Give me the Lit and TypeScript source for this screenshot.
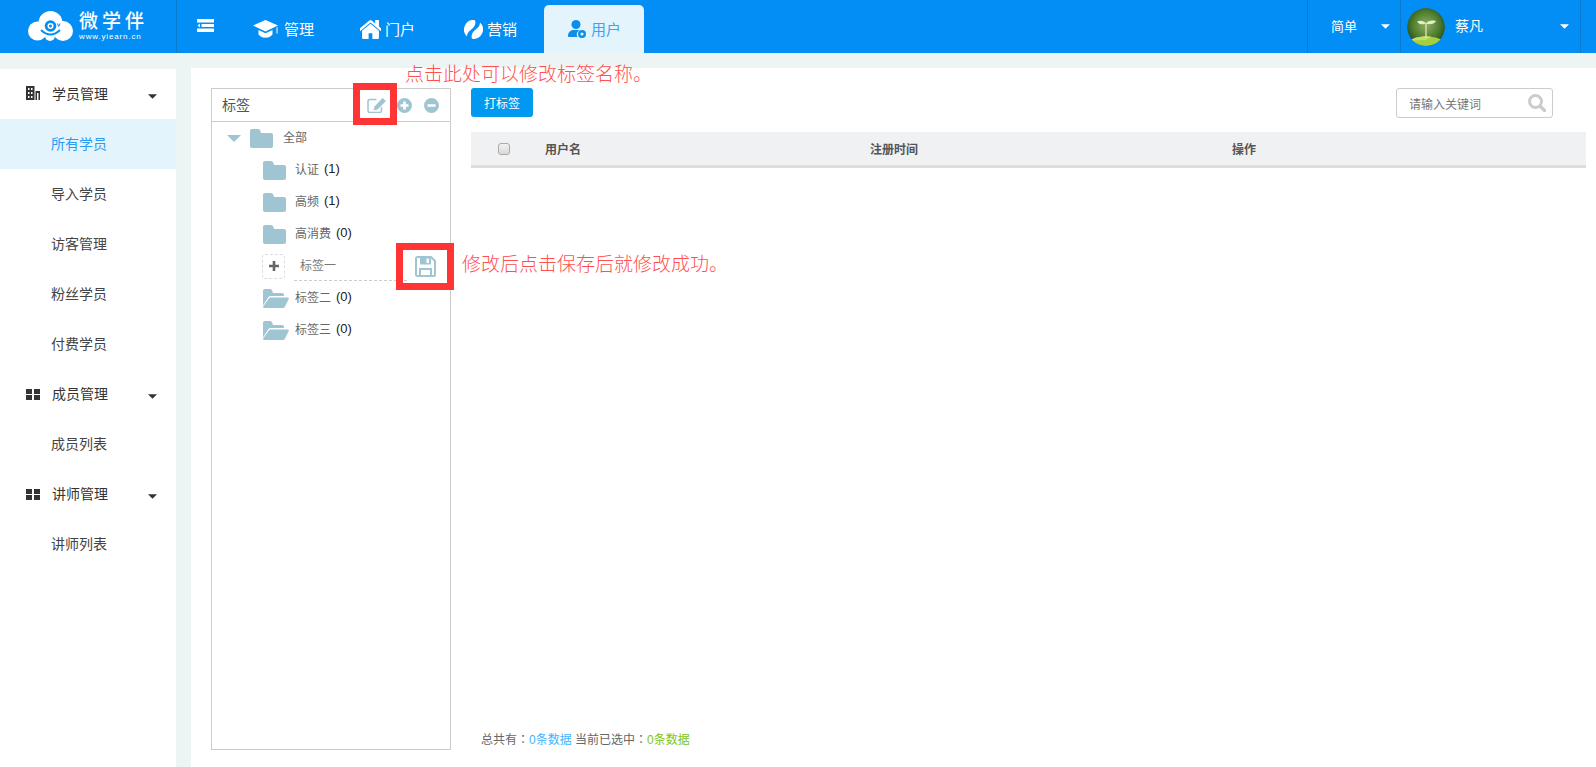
import { LitElement, html, css } from "lit";
import { customElement } from "lit/decorators.js";

const folder = html`<svg class="folder" viewBox="0 0 23 19"><path d="M2 0h6c1.500 0 2 1 2.500 2.500L11 4h10c1.200 0 2 .8 2 2v11c0 1.200-.8 2-2 2H2c-1.200 0-2-.8-2-2V2C0 .8.800 0 2 0z"/></svg>`;
const folderOpen = html`<svg class="folder-open" viewBox="0 0 26 19"><path d="M0 2c0-1.200.8-2 2-2h5c1.200 0 2 .8 2.500 2.500L10 4h9c1.200 0 2 .8 2 2v1H8c-1.500 0-2.500.6-3.200 2L0 16.500z"/><path d="M8 8.500h16.500c1.200 0 1.700.8 1.200 1.800L22 17.500c-.6 1-1.300 1.500-2.500 1.500H1.500c-1.200 0-1.700-.8-1.200-1.800L5.500 10c.6-1 1.300-1.500 2.500-1.500z"/></svg>`;
const caret = html`<svg class="caret" viewBox="0 0 8 4"><path d="M0 0h8L4 4z"/></svg>`;
const building = html`<svg class="side-ico" viewBox="0 0 14 14"><path d="M0 0h8.500v14H0zM9.500 5H14v9h-1.500V7h-1.500v7H9.500z"/><path fill="#fff" d="M2 2h1.500v2H2zM5 2h1.500v2H5zM2 6h1.500v2H2zM5 6h1.500v2H5zM2 10h1.500v2H2zM5 10h1.500v2H5z"/></svg>`;
const grid = html`<svg class="side-ico grid" viewBox="0 0 14 11"><path d="M0 0h6v5H0zM8 0h6v5H8zM0 6h6v5H0zM8 6h6v5H8z"/></svg>`;

const groups = [
  { title: "学员管理", icon: building, items: ["所有学员", "导入学员", "访客管理", "粉丝学员", "付费学员"] },
  { title: "成员管理", icon: grid, items: ["成员列表"] },
  { title: "讲师管理", icon: grid, items: ["讲师列表"] },
];

@customElement("app-root")
export class AppRoot extends LitElement {
  static styles = css`
    :host {
      display: flex;
      flex-direction: column;
      position: relative;
      height: 767px;
      overflow: hidden;
      background: #edf5f4;
      font-family: "Liberation Sans", "Noto Sans CJK SC", sans-serif;
      color: #333;
    }
    svg { display: block; flex: none; }
    .top {
      height: 53px;
      flex: none;
      display: flex;
      background: #038ef5;
      color: #fff;
      padding-right: 15px;
    }
    .logo {
      width: 177px;
      flex: none;
      box-sizing: border-box;
      padding-left: 28px;
      padding-top: 11px;
      display: flex;
      gap: 6px;
      border-right: 1px solid #0b79cc;
    }
    .cloud { width: 45px; height: 30px; }
    .logo-text { padding-top: 1px; }
    .logo-cn { font-size: 19px; line-height: 20px; letter-spacing: 4px; font-weight: 500; white-space: nowrap; }
    .logo-en { font-size: 8px; line-height: 9px; letter-spacing: 0.850px; white-space: nowrap; }
    .collapse { width: 52px; flex: none; box-sizing: border-box; padding: 19px 0 0 20px; }
    .collapse svg { width: 17px; height: 13px; }
    .tabs {
      display: grid;
      grid-template-columns: 107px 104px 104px 100px;
      padding-top: 5px;
    }
    .tab {
      display: flex;
      align-items: center;
      padding: 0 0 0 24px;
      gap: 4px;
      font-size: 15px;
      border-radius: 5px 5px 0 0;
    }
    .tab.wide { gap: 5px; }
    .tab span { margin-bottom: 2px; }
    .tab.on { background: #e3f4fd; color: #3fa2f2; }
    .spacer { flex: 1; }
    .drop {
      border-left: 1px solid #0b79cc;
      display: flex;
      align-items: center;
      box-sizing: border-box;
      height: 53px;
    }
    .drop span { margin-bottom: 3px; }
    .drop .caret { width: 9px; height: 5px; fill: #fff; }
    .d1 { width: 93px; padding-left: 23px; font-size: 13px; gap: 24px; }
    .d2 { width: 181px; border-right: 1px solid #0b79cc; padding-left: 6px; font-size: 14px; }
    .avatar { width: 38px; height: 38px; border-radius: 50%; }
    .d2 .name { margin-left: 10px; width: 105px; }
    .body { flex: 1; display: flex; gap: 15px; min-height: 0; }
    .side {
      width: 176px;
      flex: none;
      margin-top: 16px;
      background: #fff;
      font-size: 14px;
    }
    .row {
      height: 50px;
      box-sizing: border-box;
      padding: 0 0 2px 51px;
      display: flex;
      align-items: center;
      color: #444;
    }
    .row.on { background: #e3f4fd; color: #2b9cf2; }
    .row.g { padding-left: 26px; color: #333; }
    .side-ico { width: 14px; height: 14px; fill: #333; margin-right: 12px; }
    .side-ico.grid { height: 11px; margin-top: 2px; }
    .g .caret { width: 9px; height: 5px; fill: #333; margin: 7px 0 0 40px; }
    .main {
      flex: 1;
      margin-top: 15px;
      background: #fff;
      padding: 20px 10px 17px 20px;
      display: flex;
      gap: 20px;
      min-width: 0;
    }
    .panel {
      width: 240px;
      flex: none;
      box-sizing: border-box;
      border: 1px solid #ccc;
    }
    .panel-head {
      height: 32px;
      border-bottom: 1px solid #ccc;
      display: flex;
      align-items: center;
      padding: 0 11px 0 10px;
      font-size: 14px;
      color: #555;
    }
    .panel-head .t { flex: 1; margin-bottom: 2px; }
    .ph-ico { fill: #a0c5d2; }
    .edit { width: 19px; height: 15px; margin-right: 11px; }
    .circ { width: 15px; height: 15px; }
    .circ + .circ { margin-left: 12px; }
    .tree { font-size: 12px; color: #666; }
    .node { height: 32px; display: flex; align-items: center; padding-left: 51px; }
    .node span { margin-bottom: 3px; }
    .node.root { padding-left: 15px; }
    .folder { width: 23px; height: 19px; fill: #a0c5d2; margin-right: 9px; }
    .root .folder { margin-right: 10px; }
    .folder-open { width: 26px; height: 19px; fill: #a0c5d2; margin-right: 6px; }
    .tree-caret { width: 14px; height: 7px; fill: #a0c5d2; margin-right: 9px; }
    .num { font-size: 13px; color: #222; margin-left: 5px; }
    .add {
      width: 23px;
      height: 25px;
      box-sizing: border-box;
      border: 1px dashed #ddd;
      border-radius: 3px;
      display: flex;
      align-items: center;
      justify-content: center;
      margin: 0 9px 0 -1px;
    }
    .add svg { width: 10px; height: 10px; fill: #666; }
    .edit-field {
      width: 113px;
      height: 28px;
      margin-top: 1px;
      box-sizing: border-box;
      border-bottom: 1px dashed #ccc;
      padding: 0 0 3px 6px;
      display: flex;
      align-items: center;
      color: #777;
    }
    .save { width: 21px; height: 21px; margin-left: 8px; }
    .content { flex: 1; display: flex; flex-direction: column; min-width: 0; }
    .toolbar { display: flex; justify-content: space-between; align-items: flex-start; padding-right: 33px; height: 44px; }
    .btn {
      width: 62px;
      height: 29px;
      background: #0098f0;
      color: #fff;
      border-radius: 3px;
      font-size: 12px;
      display: flex;
      align-items: center;
      justify-content: center;
    }
    .search {
      width: 157px;
      height: 30px;
      box-sizing: border-box;
      border: 1px solid #ccc;
      border-radius: 3px;
      display: flex;
      align-items: center;
      justify-content: space-between;
      padding: 0 6px 0 12px;
      font-size: 12px;
      color: #777;
    }
    .search svg { width: 18px; height: 18px; }
    .thead {
      height: 36px;
      box-sizing: border-box;
      background: #f0f1f3;
      border-bottom: 3px solid #ddd;
      display: grid;
      grid-template-columns: 74px 325px 362px 1fr;
      align-items: center;
      font-size: 12px;
      font-weight: bold;
      color: #555;
    }
    .check {
      width: 12px;
      height: 12px;
      box-sizing: border-box;
      margin-left: 27px;
      border: 1px solid #aaa;
      border-radius: 3px;
      background: linear-gradient(#f2f2f2, #d9d9d9);
    }
    .tbody { flex: 1; }
    .foot { font-size: 12px; color: #666; padding: 0 0 1px 10px; line-height: 17px; }
    .colon { font-family: "Noto Sans CJK TC", sans-serif; }
    .blue { color: #3db5ff; }
    .green { color: #7cc520; }
    .box { position: absolute; box-sizing: border-box; border: 7px solid #ff3535; }
    .b1 { left: 353px; top: 83px; width: 44px; height: 42px; }
    .b2 { left: 396px; top: 243px; width: 58px; height: 47px; }
    .note { position: absolute; font-size: 19px; line-height: 24px; color: #ff4f4f; white-space: nowrap; font-weight: 300; }
    .n1 { left: 405px; top: 63px; }
    .n2 { left: 462px; top: 253px; }
  `;

  render() {
    return html`
      <div class="top">
        <div class="logo">
          <svg class="cloud" viewBox="0 0 45 30">
            <g fill="#fff">
              <circle cx="9.500" cy="20" r="9.500"/>
              <circle cx="22.500" cy="12" r="12"/>
              <circle cx="35" cy="20" r="10"/>
              <circle cx="22" cy="25" r="5"/>
            </g>
            <circle cx="22.500" cy="15" r="5.800" fill="#038ef5"/>
            <circle cx="22.500" cy="15" r="3" fill="#fff"/>
            <circle cx="22.500" cy="15" r="1.500" fill="#038ef5"/>
            <path d="M13 19c3 3 6 4.500 9.500 4.500S29 22 32 19" fill="none" stroke="#038ef5" stroke-width="1.800"/>
            <path d="M29.500 12.500l1.200 3 1.300-3" fill="none" stroke="#038ef5" stroke-width="1"/>
          </svg>
          <div class="logo-text">
            <div class="logo-cn">微学伴</div>
            <div class="logo-en">www.yiearn.cn</div>
          </div>
        </div>
        <div class="collapse">
          <svg viewBox="0 0 17 13"><path fill="#fff" d="M0 0h17v3.500H0zM0 9.500h17V13H0zM4.500 5h12.500v3H4.500z"/><path fill="#fff" d="M3 4.500v4L.5 6.500z"/></svg>
        </div>
        <div class="tabs">
          <div class="tab wide">
            <svg width="26" height="18" viewBox="0 0 26 18"><path fill="#fff" d="M12.500 0L25 5.500l-12.500 6L0 5.500zM5.500 10l7 3.300 7-3.300v4.500c-1.500 2-4 3.300-7 3.300s-5.500-1.300-7-3.300zM23.500 7.500l1-.5v6.500h-1z"/></svg>
            <span>管理</span>
          </div>
          <div class="tab">
            <svg width="21" height="21" viewBox="180 180 1432 1432"><path fill="#fff" d="M1472 992v480q0 26-19 45t-45 19h-384v-384h-256v384h-384q-26 0-45-19t-19-45v-480q0-1 .5-3t.5-3l575-474 575 474q1 2 1 6zm223-69l-62 74q-8 9-21 11h-3q-13 0-21-7l-692-577-692 577q-12 8-24 7-13-2-21-11l-62-74q-8-10-7-23.500t11-21.500l719-599q32-26 76-26t76 26l244 204v-195q0-14 9-23t23-9h192q14 0 23 9t9 23v408l219 182q10 8 11 21.500t-7 23.500z"/></svg>
            <span>门户</span>
          </div>
          <div class="tab">
            <svg width="19" height="19" viewBox="0 0 19 19"><path fill="#fff" d="M11 .2A9.500 9.500 0 0 0 3 16.500C3 12 7 10 9 8c2-2 3-5 2-7.800z"/><path fill="#fff" d="M8 18.800A9.500 9.500 0 0 0 16 2.500C16 7 12 9 10 11c-2 2-3 5-2 7.800z"/></svg>
            <span>营销</span>
          </div>
          <div class="tab on wide">
            <svg width="18" height="18" viewBox="0 0 18 18"><circle cx="8" cy="4.500" r="4.500" fill="#0d8fe6"/><path fill="#0d8fe6" d="M1 17c-.6 0-1-.4-1-1 0-3.500 2.500-6 5.500-6h4c.8 0 1.500.2 2 .5-2.500.8-3.500 4-2 6.500z"/><circle cx="14" cy="14" r="2.800" fill="none" stroke="#0d8fe6" stroke-width="2.400"/></svg>
            <span>用户</span>
          </div>
        </div>
        <div class="spacer"></div>
        <div class="drop d1"><span>简单</span>${caret}</div>
        <div class="drop d2">
          <svg class="avatar" viewBox="0 0 38 38">
            <defs><radialGradient id="av" cx="50%" cy="45%" r="58%"><stop offset="0" stop-color="#8fae62"/><stop offset=".6" stop-color="#4f7e30"/><stop offset="1" stop-color="#23491a"/></radialGradient></defs>
            <circle cx="19" cy="19" r="19" fill="url(#av)"/>
            <path d="M4 32c3-2 6-3 9-3 3-1 9-1 12 0 3 0 6 1 9 2.500-3 4-9 6.500-15 6.500S7 36 4 32z" fill="#a6cf3c"/>
            <path d="M4 32c3-2 6-3 9-3 3-1 9-1 12 0-4 1-6 4-9 3-3 0-8 1-12 0z" fill="#c3dd72"/>
            <path d="M18.300 30V15h1.400v15z" fill="#d8e6b0"/>
            <path d="M19 15.500c-2-3-6-3.500-9-2 2 3 6 3.500 9 2zM19 15.500c2-3 6-3.500 10-2.500-2 3.500-7 4-10 2.500z" fill="#e3eeca"/>
          </svg>
          <span class="name">蔡凡</span>${caret}
        </div>
      </div>
      <div class="body">
        <div class="side">
          ${groups.map(
            (g) => html`
              <div class="row g">${g.icon}<span>${g.title}</span>${caret}</div>
              ${g.items.map((i) => html`<div class="row ${i === "所有学员" ? "on" : ""}">${i}</div>`)}
            `
          )}
        </div>
        <div class="main">
          <div class="panel">
            <div class="panel-head">
              <span class="t">标签</span>
              <svg class="ph-ico edit" viewBox="0 0 19 15">
                <path d="M9.500 1.500H3C1.800 1.500 1 2.300 1 3.500v9c0 1.200.8 2 2 2h9.500c1.200 0 2-.8 2-2V9" fill="none" stroke="#a0c5d2" stroke-width="1.500"/>
                <path d="M15.500 0L19 3l-8.500 8.500L6.500 12.500l1-4z"/>
              </svg>
              <svg class="ph-ico circ" viewBox="0 0 15 15"><path fill-rule="evenodd" d="M7.500 0a7.500 7.500 0 1 0 0 15 7.500 7.500 0 0 0 0-15zM6.200 3.500h2.600v2.700h2.700v2.600H8.800v2.700H6.200V8.800H3.500V6.200h2.700z"/></svg>
              <svg class="ph-ico circ" viewBox="0 0 15 15"><path fill-rule="evenodd" d="M7.500 0a7.500 7.500 0 1 0 0 15 7.500 7.500 0 0 0 0-15zM3.500 6.200h8v2.600h-8z"/></svg>
            </div>
            <div class="tree">
              <div class="node root">
                <svg class="tree-caret" viewBox="0 0 14 7"><path d="M0 0h14L7 7z"/></svg>
                ${folder}<span>全部</span>
              </div>
              <div class="node">${folder}<span>认证</span><span class="num">(1)</span></div>
              <div class="node">${folder}<span>高频</span><span class="num">(1)</span></div>
              <div class="node">${folder}<span>高消费</span><span class="num">(0)</span></div>
              <div class="node">
                <div class="add"><svg viewBox="0 0 10 10"><path d="M3.700 0h2.600v3.700H10v2.600H6.300V10H3.700V6.300H0V3.700h3.700z"/></svg></div>
                <div class="edit-field">标签一</div>
                <svg class="save" viewBox="0 0 21 21"><path fill="none" stroke="#a0c5d2" stroke-width="2" d="M2.500 1H16l4 4v13.500c0 1-.6 1.500-1.500 1.500h-16C1.600 20 1 19.500 1 18.500v-16C1 1.600 1.600 1 2.500 1z"/><path fill="#a0c5d2" d="M5 1h11v7.500H5zM4 12h13v8h-2v-6H6v6H4z"/><path fill="#fff" d="M11.500 2.500h2.500v4.500h-2.500z"/></svg>
              </div>
              <div class="node">${folderOpen}<span>标签二</span><span class="num">(0)</span></div>
              <div class="node">${folderOpen}<span>标签三</span><span class="num">(0)</span></div>
            </div>
          </div>
          <div class="content">
            <div class="toolbar">
              <div class="btn">打标签</div>
              <div class="search">
                <span>请输入关键词</span>
                <svg viewBox="0 0 18 18"><circle cx="7.500" cy="7.500" r="6" fill="none" stroke="#ccc" stroke-width="3"/><path d="M12 12l5 5" stroke="#ccc" stroke-width="3.400" stroke-linecap="round"/></svg>
              </div>
            </div>
            <div class="thead">
              <div class="check"></div>
              <div>用户名</div>
              <div>注册时间</div>
              <div>操作</div>
            </div>
            <div class="tbody"></div>
            <div class="foot">总共有<span class="colon">：</span><span class="blue">0条数据</span> 当前已选中<span class="colon">：</span><span class="green">0条数据</span></div>
          </div>
        </div>
      </div>
      <div class="box b1"></div>
      <div class="box b2"></div>
      <div class="note n1">点击此处可以修改标签名称。</div>
      <div class="note n2">修改后点击保存后就修改成功。</div>
    `;
  }
}
